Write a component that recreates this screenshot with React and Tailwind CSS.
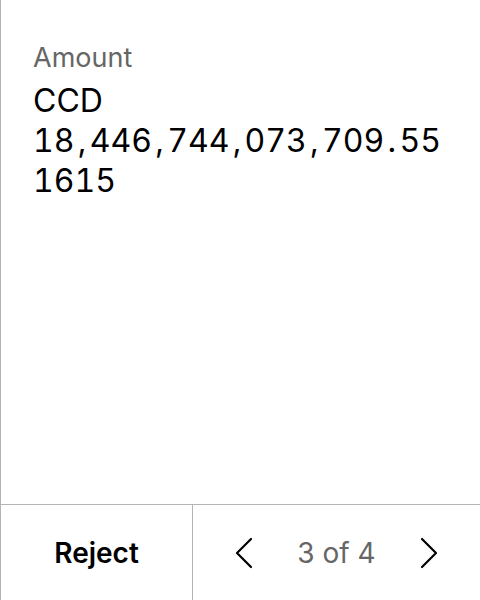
function Amount({ text }) {
  const parts = text.split(/([,.])/);
  return parts.map((p, i) =>
    p === "," || p === "." ? (
      <span key={i} className="mx-[3.3px]">{p}</span>
    ) : (
      <span key={i}>{p}</span>
    )
  );
}

export default function App() {
  return (
    <div className="w-[480px] h-[600px] bg-white flex flex-col border-l border-[#b4b4b4]" style={{ fontFamily: "Inter, sans-serif" }}>
      <div className="flex-1 flex flex-col pt-[42px] pl-[32px] pr-[33px]">
        <div className="text-[27px] leading-[32px] text-[#666666]">Amount</div>
        <div className="text-[32px] leading-[40px] text-black break-words tabular-nums mt-[7px]">
          CCD <Amount text="18,446,744,073,709.551615" />
        </div>
      </div>
      <div className="h-[96px] border-t border-[#b4b4b4] flex">
        <button className="w-[191px] flex items-center justify-center text-[28px] font-semibold text-black">Reject</button>
        <div className="flex-1 border-l border-[#b4b4b4] flex items-center justify-between px-[42px]">
          <svg width="18" height="32" viewBox="0 0 18 32" fill="none" stroke="black" strokeWidth="2.2" strokeLinecap="round" strokeLinejoin="round"><path d="M16 2 L2 16 L16 30" /></svg>
          <span className="text-[28px] text-[#666666]">3 of 4</span>
          <svg width="18" height="32" viewBox="0 0 18 32" fill="none" stroke="black" strokeWidth="2.2" strokeLinecap="round" strokeLinejoin="round"><path d="M2 2 L16 16 L2 30" /></svg>
        </div>
      </div>
    </div>
  );
}
